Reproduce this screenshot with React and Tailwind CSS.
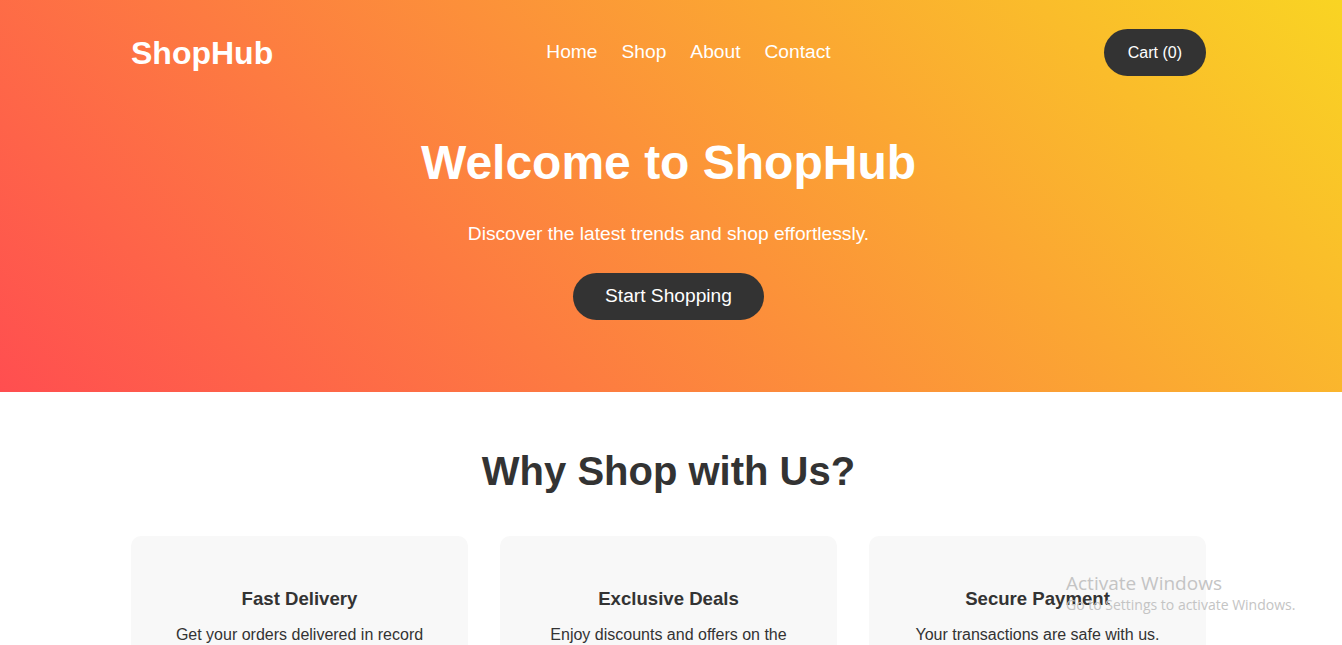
import React from 'react';

const features = [
  { title: 'Fast Delivery', text: 'Get your orders delivered in record time.' },
  { title: 'Exclusive Deals', text: 'Enjoy discounts and offers on the best products.' },
  { title: 'Secure Payment', text: 'Your transactions are safe with us.' },
];

const App = () => {
  return (
    <div className="relative min-h-screen bg-white font-['Liberation_Sans',Arial,sans-serif] text-[#333]">
      {/* Hero */}
      <header className="bg-[linear-gradient(45deg,#ff4e50,#f9d423)] text-white">
        <nav className="ml-[131px] w-[1075px] flex items-center justify-between py-[29px]">
          <a href="#" className="text-[32px] font-bold leading-none">ShopHub</a>
          <ul className="flex items-center gap-6 text-[19.2px]">
            <li><a href="#">Home</a></li>
            <li><a href="#">Shop</a></li>
            <li><a href="#">About</a></li>
            <li><a href="#">Contact</a></li>
          </ul>
          <button className="h-[47px] px-6 rounded-full bg-[#333] text-white text-base">
            Cart (0)
          </button>
        </nav>

        <div className="flex flex-col items-center text-center pb-[72px] pr-[5px]">
          <h1 className="mt-[30px] text-[48px] font-bold leading-[55px]">Welcome to ShopHub</h1>
          <p className="mt-[33px] text-[19.2px] leading-[22px]">Discover the latest trends and shop effortlessly.</p>
          <button className="mt-[28px] h-[47px] px-8 rounded-full bg-[#333] text-white text-[19.2px]">
            Start Shopping
          </button>
        </div>
      </header>

      {/* Features */}
      <section className="ml-[131px] w-[1075px] pt-[56px] pb-16">
        <h2 className="text-center text-[40px] font-bold leading-[46px]">Why Shop with Us?</h2>
        <div className="grid grid-cols-3 gap-8 mt-[42px]">
          {features.map((f) => (
            <div key={f.title} className="bg-[#f8f8f8] rounded-[10px] pt-[52px] pb-8 px-10 text-center">
              <h3 className="text-[18.6px] font-bold leading-[22px]">{f.title}</h3>
              <p className="mt-4 text-base leading-[18px] text-[#333]">{f.text}</p>
            </div>
          ))}
        </div>
      </section>

      {/* OS watermark */}
      <div className="absolute left-[1066px] top-[570px] text-[#c4c4c4] font-['Open_Sans',sans-serif] pointer-events-none">
        <div className="text-[19px] leading-[26px]">Activate Windows</div>
        <div className="text-[14px] leading-[18px]">Go to Settings to activate Windows.</div>
      </div>
    </div>
  );
};

export default App;
